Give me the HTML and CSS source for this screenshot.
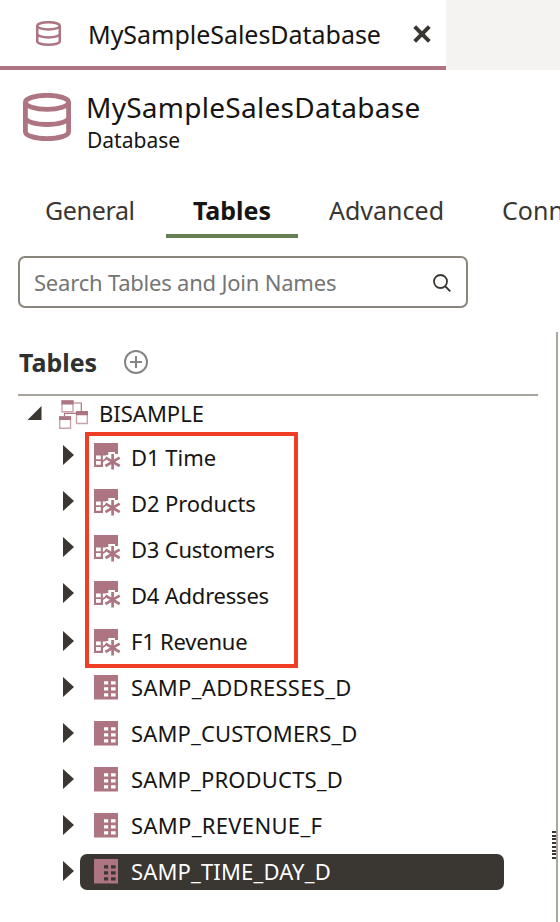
FILE: index.html
```html
<!DOCTYPE html>
<html lang="en">
<head>
<meta charset="utf-8">
<title>MySampleSalesDatabase</title>
<link rel="stylesheet" href="styles.css">
</head>
<body>
<svg class="defs" width="0" height="0">
  <symbol id="db" viewBox="0 0 48 48"><g fill="none" stroke="currentColor" stroke-width="4.8"><ellipse cx="24" cy="9.3" rx="21.6" ry="7"/><path d="M2.4 9.3V38.7C2.4 42.6 12 45.6 24 45.6S45.6 42.6 45.6 38.7V9.3M2.4 24.5C2.4 28.4 12 31.5 24 31.5S45.6 28.4 45.6 24.5"/></g></symbol>
  <symbol id="schema" viewBox="0 0 29 29"><path d="M14 3H22.3V12M5.5 16V13.3H18" fill="none" stroke="#ac7581" stroke-width="1.2"/><g fill="#fff" stroke="#c9a3ab" stroke-width="1.4"><path d="M3 .7H14V11.7H3ZM17.5 11.7H28.3V23.5H17.5ZM.7 17H11.5V28.3H.7Z"/></g><path d="M2.5 0.5H14.5V4.5H2.5ZM17 11H29V15.3H17ZM0 16.3H12V20H0Z" fill="#ac7581"/></symbol>
  <symbol id="alias" viewBox="0 0 27 27"><path d="M0 0H24V24H0Z" fill="#ac7581"/><path d="M2 12.5H6.8V16.3H2ZM2 18H6.8V21.8H2ZM8.8 12.5H12V15L8.8 17ZM14.3 9H21V11H24.5V27H13L9 24V19L12 17V12H14.3Z" fill="#fff"/><path d="M18.6 11V26.5M11.5 14.7L25.7 23M25.7 14.7L11.5 23" stroke="#ac7581" stroke-width="2.7" fill="none"/></symbol>
  <symbol id="table" viewBox="0 0 24 25"><path d="M0 0H24V24.5H0Z" fill="#ac7581"/><path class="cells" d="M10 6.2h4.2v3.2H10ZM17 6.2h4.6v3.2H17ZM10 12.2h4.2v3.2H10ZM17 12.2h4.6v3.2H17ZM10 18.2h4.2v3.2H10ZM17 18.2h4.6v3.2H17Z" fill="currentColor"/></symbol>
</svg>
<header class="tabbar">
  <div class="doc-tab">
    <svg class="db-small"><use href="#db"/></svg>
    <span class="doc-name">MySampleSalesDatabase</span>
    <svg class="close" viewBox="0 0 18 18"><path d="M1.7 1.7L16.3 16.3M16.3 1.7L1.7 16.3" stroke="#3a3631" stroke-width="4"/></svg>
  </div>
</header>
<section class="heading">
  <svg class="db-large"><use href="#db"/></svg>
  <div><h1>MySampleSalesDatabase</h1><p>Database</p></div>
</section>
<nav class="tabs">
  <span class="tab general">General</span><span class="tab active">Tables</span><span class="tab advanced">Advanced</span><span class="tab">Connections</span>
</nav>
<div class="search">
  <span>Search Tables and Join Names</span>
  <svg viewBox="0 0 18 18"><g fill="none" stroke="#3a3631" stroke-width="1.8"><circle cx="7.5" cy="7.5" r="6.5"/><path d="M12 12L17.3 17.3"/></g></svg>
</div>
<main class="panel">
  <div class="panel-head">
    <h2>Tables</h2>
    <svg viewBox="0 0 24 24"><g fill="none" stroke="#858684" stroke-width="2"><circle cx="12" cy="12" r="11"/><path d="M12 6V18M6 12H18"/></g></svg>
  </div>
  <div class="tree">
    <div class="root"><svg class="open" viewBox="0 0 14 14"><path d="M14 0V14H0Z"/></svg><svg class="schema"><use href="#schema"/></svg><span>BISAMPLE</span></div>
    <div class="row raised"><i class="arrow"></i><div class="item"><svg class="alias"><use href="#alias"/></svg><span>D1 Time</span></div></div>
    <div class="row raised"><i class="arrow"></i><div class="item"><svg class="alias"><use href="#alias"/></svg><span class="snug">D2 Products</span></div></div>
    <div class="row raised"><i class="arrow"></i><div class="item"><svg class="alias"><use href="#alias"/></svg><span class="tight">D3 Customers</span></div></div>
    <div class="row raised"><i class="arrow"></i><div class="item"><svg class="alias"><use href="#alias"/></svg><span class="tight">D4 Addresses</span></div></div>
    <div class="row"><i class="arrow"></i><div class="item"><svg class="alias"><use href="#alias"/></svg><span class="tight">F1 Revenue</span></div></div>
    <div class="row"><i class="arrow"></i><div class="item"><svg class="table"><use href="#table"/></svg><span class="wide">SAMP_ADDRESSES_D</span></div></div>
    <div class="row"><i class="arrow"></i><div class="item"><svg class="table"><use href="#table"/></svg><span class="loose">SAMP_CUSTOMERS_D</span></div></div>
    <div class="row"><i class="arrow"></i><div class="item"><svg class="table"><use href="#table"/></svg><span class="loose">SAMP_PRODUCTS_D</span></div></div>
    <div class="row"><i class="arrow"></i><div class="item"><svg class="table"><use href="#table"/></svg><span class="wide">SAMP_REVENUE_F</span></div></div>
    <div class="row"><i class="arrow"></i><div class="item selected"><svg class="table"><use href="#table"/></svg><span class="loose">SAMP_TIME_DAY_D</span></div></div>
    <div class="highlight"></div>
  </div>
  <div class="splitter"><div class="grip"></div></div>
</main>
</body>
</html>
```
FILE: styles.css
```css
* { box-sizing: border-box; }
body { margin: 0; width: 560px; height: 922px; overflow: hidden; background: #fff; color: #161513; font-family: "Noto Sans", sans-serif; white-space: nowrap; }
svg { display: block; flex: none; }
.defs { position: absolute; }
h1, h2, p { margin: 0; font-weight: 400; }
.tabbar { height: 70px; background: #f5f3f1; }
.doc-tab { width: 446px; height: 70px; background: #fff; border-bottom: 4px solid #ac7581; display: flex; align-items: center; padding: 1px 0 0 36px; }
.db-small { width: 25px; height: 25px; color: #ac7581; }
.doc-name { margin-left: 27px; width: 325px; font-size: 25px; line-height: 34px; letter-spacing: -0.03px; }
.close { width: 18px; height: 18px; }
.heading { display: flex; height: 115px; padding: 23px 0 0 23px; }
.db-large { width: 48px; height: 48px; margin-right: 16px; color: #ac7581; }
h1 { font-size: 28px; line-height: 32px; margin: -2px 0 0 -1px; letter-spacing: 0.27px; }
.heading p { font-size: 21px; line-height: 30px; margin-top: 2px; }
.tabs { display: flex; height: 53px; color: #3a3631; font-size: 25px; line-height: 51px; padding-left: 45px; }
.tab { flex: none; }
.tab.general { width: 121px; letter-spacing: -0.35px; }
.tab.active { width: 132px; border-bottom: 4px solid #657f55; text-align: center; color: #161513; font-weight: 700; }
.tab.advanced { width: 204px; padding-left: 31px; }
.search { display: flex; align-items: center; margin: 18px 0 0 18px; width: 450px; height: 52px; padding: 0 15px 0 14px; justify-content: space-between; border: 2px solid #8b8580; border-radius: 7px; color: #757575; font-size: 22px; letter-spacing: -0.21px; }
.search span { margin-top: -1px; }
.search svg { width: 18px; height: 18px; margin-top: 1px; }
.panel { display: flex; flex-wrap: wrap; position: relative; margin-top: 24px; height: 590px; padding-left: 18px; align-content: flex-start; }
.panel-head { width: 520px; height: 64px; border-bottom: 2px solid #aaa59f; display: flex; align-items: center; }
h2 { width: 105px; margin: -2px 0 0 1px; font-size: 25px; font-weight: 700; color: #2f3130; }
.panel-head svg { width: 24px; height: 24px; margin-top: -3px; }
.tree { width: 520px; position: relative; font-size: 22px; line-height: 36px; }
.root { display: flex; align-items: center; height: 39px; padding: 0 0 5px 9px; }
.open { width: 15px; height: 14px; fill: #3a3631; }
.schema { width: 29px; height: 29px; margin: 2px 11px 0 17px; }
.row { display: flex; align-items: center; height: 46px; padding-left: 45px; }
.arrow { width: 11px; height: 20px; margin: -2px 6px 0 0; background: #3a3631; clip-path: polygon(0 0, 100% 50%, 0 100%); }
.item { width: 424px; height: 36px; border-radius: 7px; display: flex; align-items: center; padding-left: 14px; color: #161513; }
.item span { margin-top: -2px; }
.snug { letter-spacing: -0.1px; }
.tight { letter-spacing: -0.22px; }
.loose { letter-spacing: 0.16px; }
.wide { letter-spacing: 0.32px; }
.alias { width: 27px; height: 27px; margin-right: 10px; }
.table { width: 24px; height: 25px; margin: -1px 13px 0 0; color: #fff; }
.raised .arrow { margin-top: -6px; }
.raised .alias { margin-top: -4px; }
.selected { background: #3a3631; color: #fff; }
.selected .table { color: #3a3631; }
.highlight { position: absolute; left: 67px; top: 36px; width: 213px; height: 236px; border: 4px solid #ef3e25; }
.splitter { position: absolute; left: 552px; top: 0; width: 6px; height: 590px; border-right: 2px solid #aaa59f; padding-top: 499px; }
.grip { width: 4px; height: 28px; background: repeating-linear-gradient(#3a3631 0 2px, #fff 2px 3.7px); }
```
